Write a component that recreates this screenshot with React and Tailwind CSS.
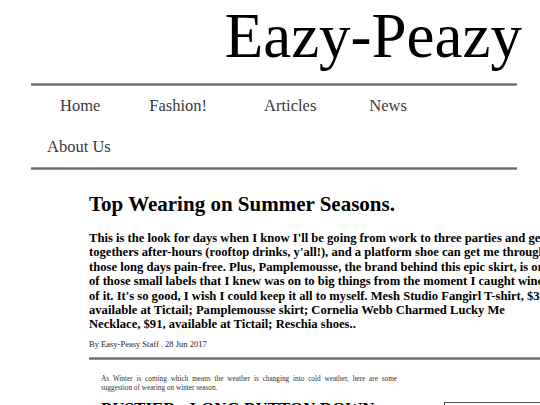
export default function App() {
  return (
    <div className="w-[540px] overflow-hidden bg-white font-['Liberation_Serif','Times_New_Roman',serif] text-black">
      {/* Title */}
      <div className="pt-[5px] pr-[18px] text-right text-[63px] leading-[63px]">Eazy-Peazy</div>

      {/* Nav */}
      <div className="ml-[31px] mt-[15px] h-[3px] w-[486px] border-y border-[#9a9a9a] bg-[#6a6a6a]" />
      <nav className="text-[16.5px] leading-[20px] text-[#3a3a3a]">
        <div className="mt-[10px] flex">
          <span className="ml-[60px]">Home</span>
          <span className="ml-[49px]">Fashion!</span>
          <span className="ml-[57px]">Articles</span>
          <span className="ml-[53px]">News</span>
        </div>
        <div className="mt-[21px] flex">
          <span className="ml-[47px]">About Us</span>
        </div>
      </nav>
      <div className="ml-[31px] mt-[10px] h-[3px] w-[486px] border-y border-[#9a9a9a] bg-[#6a6a6a]" />

      {/* Article */}
      <div className="ml-[89px] w-[500px]">
        <h1 className="mt-[22px] text-[21px] font-bold leading-[24px]">Top Wearing on Summer Seasons.</h1>
        <p className="mt-[15px] w-[464px] text-[12.6px] font-bold leading-[14.4px]">
          This is the look for days when I know I'll be going from work to three parties and get-togethers after-hours (rooftop drinks, y'all!), and a platform shoe can get me through those long days pain-free. Plus, Pamplemousse, the brand behind this epic skirt, is one of those small labels that I knew was on to big things from the moment I caught wind of it. It's so good, I wish I could keep it all to myself. Mesh Studio Fangirl T-shirt, $35, available at Tictail; Pamplemousse skirt; Cornelia Webb Charmed Lucky Me Necklace, $91, available at Tictail; Reschia shoes..
        </p>
        <div className="mt-[7px] text-[8.5px] leading-[10px] text-[#222]">By Easy-Peasy Staff . 28 Jun 2017</div>
        <div className="mt-[8px] h-[3px] w-[500px] border-y border-[#9a9a9a] bg-[#6a6a6a]" />

        <div className="ml-[12px] mt-[15px] flex items-start">
          <div className="w-[296px] shrink-0">
            <p className="text-justify text-[7.25px] leading-[9px] text-[#333]">
              As Winter is coming which means the weather is changing into cold weather, here are some suggestion of wearing on winter season.
            </p>
            <h2 className="mt-[6px] text-[17px] font-bold leading-[20px]">BUSTIER - LONG BUTTON DOWN</h2>
            <p className="mt-[8px] text-[12px] leading-[14px]">
              A long button down shirt worn over a bustier is a cozy and stylish look for the cold days of winter.
            </p>
          </div>
          <div className="ml-[47px] mt-[27px] h-[120px] w-[160px] shrink-0 border border-[#555]" />
        </div>
        <div className="h-[40px]" />
      </div>
    </div>
  );
}
